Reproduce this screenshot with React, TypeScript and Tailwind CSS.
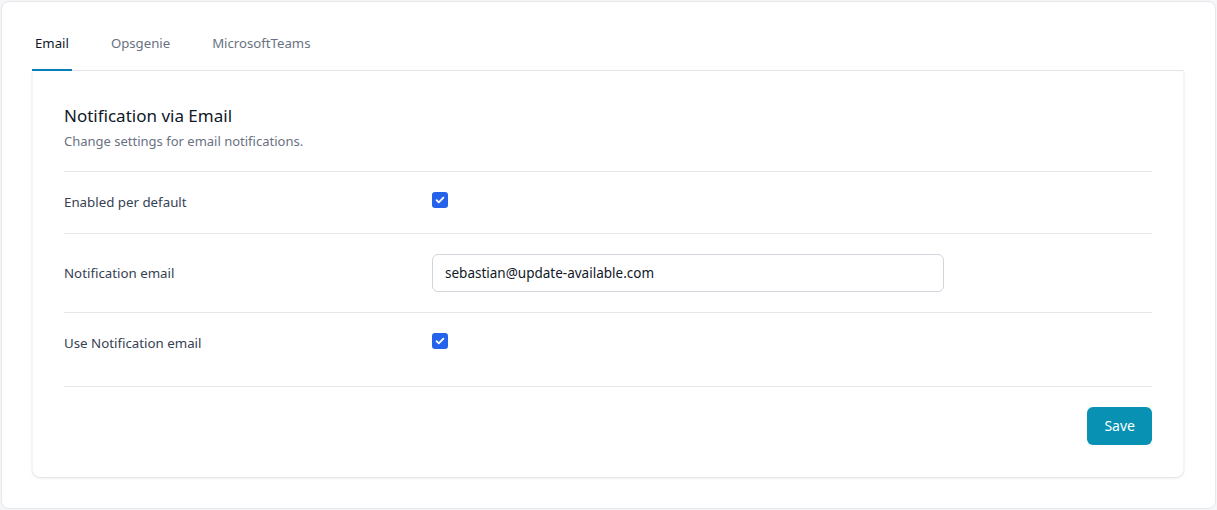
import { useState } from 'react';

const tabs = ['Email', 'Opsgenie', 'MicrosoftTeams'];

function Checkbox({ checked, onChange }: { checked: boolean; onChange: () => void }) {
  return (
    <button
      type="button"
      onClick={onChange}
      className={`flex h-4 w-4 items-center justify-center rounded-[3px] ${
        checked ? 'bg-[#2563eb]' : 'border border-gray-300 bg-white'
      }`}
    >
      {checked && (
        <svg viewBox="0 0 16 16" className="h-4 w-4" fill="none">
          <path d="M4.6 8.2l2.2 2.2 4.6-4.8" stroke="white" strokeWidth="1.8" strokeLinecap="round" strokeLinejoin="round" />
        </svg>
      )}
    </button>
  );
}

export default function App() {
  const [active, setActive] = useState('Email');
  const [enabled, setEnabled] = useState(true);
  const [useEmail, setUseEmail] = useState(true);
  const [email, setEmail] = useState('sebastian@update-available.com');

  return (
    <div className="h-[510px] w-full bg-[#f5f6f7] p-px" style={{ fontFamily: '"Noto Sans", sans-serif' }}>
      <div className="h-full rounded-lg border border-gray-200 bg-white pt-[15px] pr-[31px] pl-[30px]">
        {/* Tabs */}
        <div className="flex gap-[36px] border-b border-gray-200">
          {tabs.map(tab => (
            <button
              key={tab}
              type="button"
              onClick={() => setActive(tab)}
              className={`-mb-px border-b-2 px-[3px] pt-4 pb-4 text-[13.2px] leading-5 ${
                active === tab ? 'border-[#0a7fb5] text-gray-900' : 'border-transparent text-gray-500'
              }`}
            >
              {tab}
            </button>
          ))}
        </div>

        {/* Card */}
        <div className="rounded-b-lg border border-t-0 border-b-0 border-gray-100 bg-white px-[31px] pt-8 pb-8 shadow">
          <h3 className="text-[17px] leading-[26px] text-gray-900">Notification via Email</h3>
          <p className="mt-0.5 text-[13px] leading-5 text-gray-500">Change settings for email notifications.</p>

          <div className="mt-5 divide-y divide-gray-200 border-t border-b border-gray-200">
            <div className="grid grid-cols-3 items-start gap-4 py-5">
              <label className="text-[13.3px] leading-[21px] text-gray-700">Enabled per default</label>
              <div className="col-span-2">
                <Checkbox checked={enabled} onChange={() => setEnabled(!enabled)} />
              </div>
            </div>
            <div className="grid grid-cols-3 items-center gap-4 py-5">
              <label className="text-[13.3px] leading-[21px] text-gray-700">Notification email</label>
              <div className="col-span-2">
                <input
                  type="text"
                  value={email}
                  onChange={e => setEmail(e.target.value)}
                  className="h-[38px] w-full max-w-lg rounded-md border border-gray-300 px-3 text-[13.5px] text-gray-900 focus:outline-none"
                />
              </div>
            </div>
            <div className="grid grid-cols-3 items-start gap-4 pt-5 pb-8">
              <label className="text-[13.3px] leading-[21px] text-gray-700">Use Notification email</label>
              <div className="col-span-2">
                <Checkbox checked={useEmail} onChange={() => setUseEmail(!useEmail)} />
              </div>
            </div>
          </div>

          <div className="flex justify-end pt-5">
            <button
              type="button"
              className="h-[38px] rounded-md bg-[#0891b2] px-[17px] text-sm text-white"
            >
              Save
            </button>
          </div>
        </div>
      </div>
    </div>
  );
}
